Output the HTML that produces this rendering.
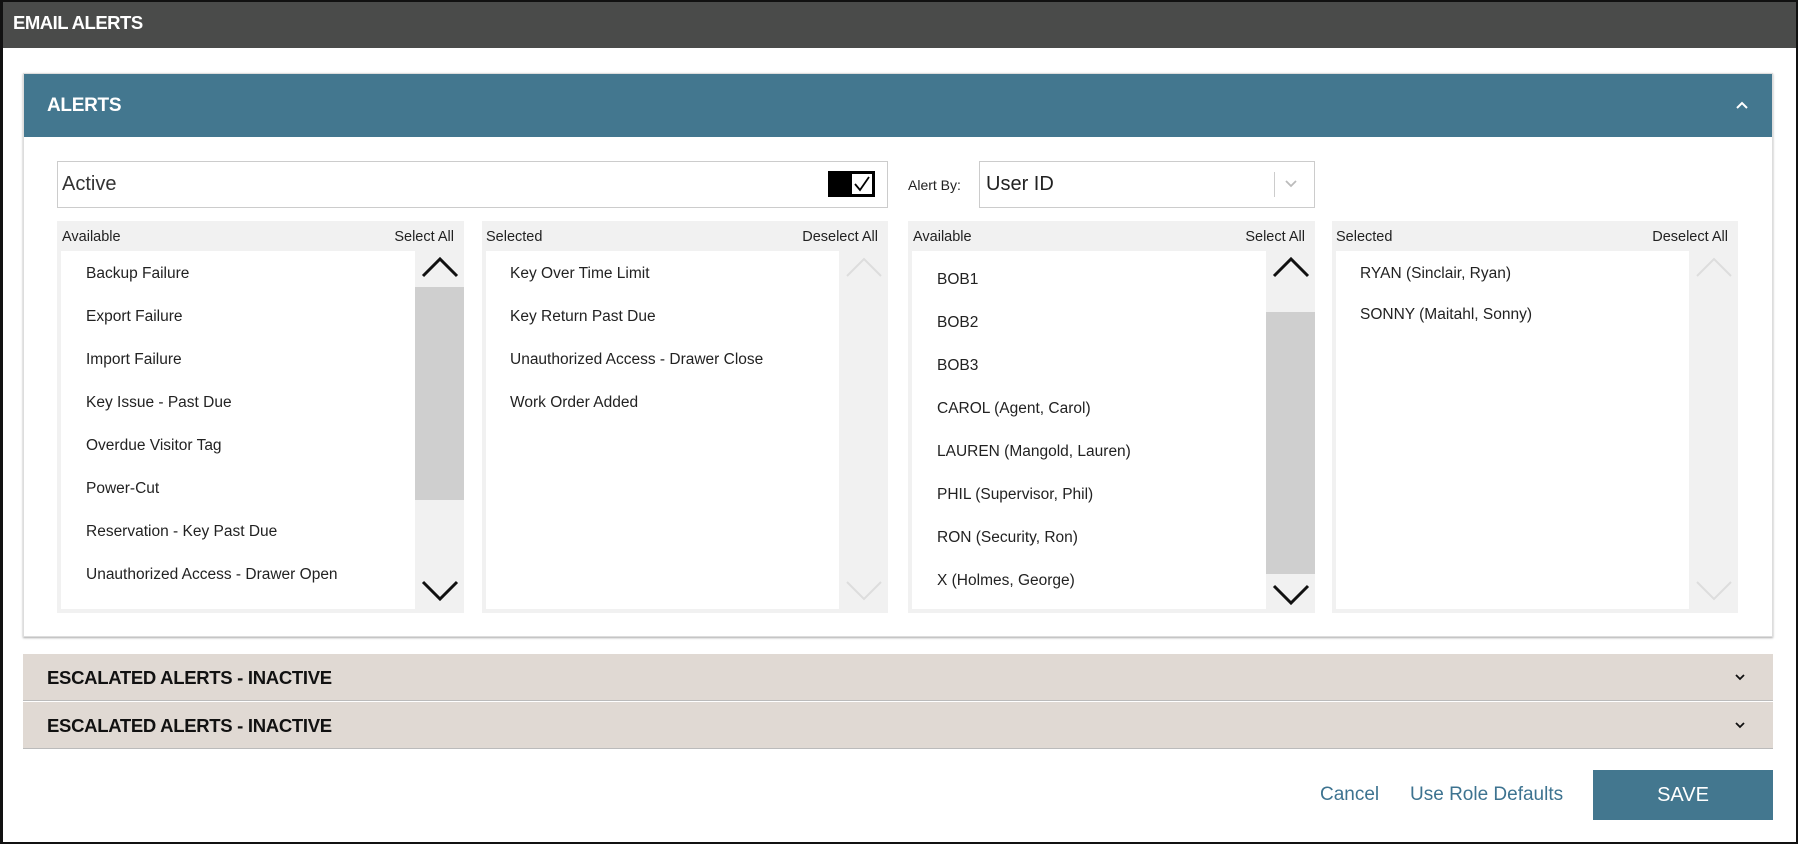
<!DOCTYPE html>
<html><head><meta charset="utf-8"><style>
*{box-sizing:border-box;margin:0;padding:0}
body{width:1798px;height:844px;overflow:hidden;background:#fff;font-family:"Liberation Sans",sans-serif;position:relative}
.frame{position:absolute;left:0;top:0;width:1798px;height:844px;border:2px solid #111;border-left-width:3px}
.top{position:absolute;left:0;top:0;width:1798px;height:48px;background:#4a4b4a;color:#fff;font-weight:bold;font-size:18.5px;line-height:46px;padding-left:13px;letter-spacing:-0.5px}
.panel{position:absolute;left:23px;top:73px;width:1750px;height:564px;background:#fff;border:1px solid #ddd;box-shadow:0 1px 2px #aaa}
.ph{position:absolute;left:0;top:0;width:100%;height:63px;background:#43778f;color:#fff;font-weight:bold;font-size:19px;line-height:63px;padding-left:23px;letter-spacing:-0.3px}
.abs{position:absolute}
.box{position:absolute;border:1px solid #ccc;background:#fff}
.list{position:absolute;top:221px;height:392px;background:#f1f1f1;font-size:15.5px;color:#222}
.lh{position:absolute;top:8px;font-size:14.5px;color:#222}
.inner{position:absolute;top:30px;bottom:4px;background:#fff}
.it{position:absolute;white-space:nowrap}
.thumb{position:absolute;background:#cfcfcf}
.esc{position:absolute;left:23px;width:1750px;height:47px;background:#e0d9d3;border-bottom:1px solid #bbb;font-weight:bold;font-size:18.5px;line-height:47px;padding-left:24px;color:#111;letter-spacing:-0.3px}
.lnk{position:absolute;top:784px;color:#3d7390;font-size:19px}
</style></head><body>
<div class="top">EMAIL ALERTS</div>
<div class="frame"></div>
<div class="panel">
<div class="ph">ALERTS</div>
<svg class="abs" style="left:1711px;top:26px" width="14" height="10"><path d="M2 8 L7 3 L12 8" stroke="#fff" stroke-width="2" fill="none"/></svg>
</div>
<div class="box" style="left:57px;top:161px;width:831px;height:47px"></div>
<div class="abs" style="left:62px;top:173px;font-size:20px;color:#333">Active</div>
<div class="abs" style="left:828px;top:171px;width:47px;height:26px;background:#000"></div>
<div class="abs" style="left:851px;top:173px;width:22px;height:22px;background:#fff;border:1px solid #000"></div>
<svg class="abs" style="left:852px;top:174px" width="20" height="20"><path d="M3 10 L8 16 L17 3" stroke="#000" stroke-width="1.8" fill="none"/></svg>
<div class="abs" style="left:908px;top:177px;font-size:14px;color:#222">Alert By:</div>
<div class="box" style="left:979px;top:161px;width:336px;height:47px"></div>
<div class="abs" style="left:986px;top:173px;font-size:20px;color:#222">User ID</div>
<div class="abs" style="left:1274px;top:172px;width:1px;height:25px;background:#ccc"></div>
<svg class="abs" style="left:1284px;top:179px" width="14" height="10"><path d="M2 2 L7 7 L12 2" stroke="#bbb" stroke-width="1.8" fill="none"/></svg>

<div class="list" style="left:57px;width:407px">
<div class="lh" style="left:5px">Available</div><div class="lh" style="right:10px">Select All</div>
<div class="inner" style="left:4px;width:354px">
<div class="it" style="left:25px;top:14px">Backup Failure</div>
<div class="it" style="left:25px;top:57px">Export Failure</div>
<div class="it" style="left:25px;top:100px">Import Failure</div>
<div class="it" style="left:25px;top:143px">Key Issue - Past Due</div>
<div class="it" style="left:25px;top:186px">Overdue Visitor Tag</div>
<div class="it" style="left:25px;top:229px">Power-Cut</div>
<div class="it" style="left:25px;top:272px">Reservation - Key Past Due</div>
<div class="it" style="left:25px;top:315px">Unauthorized Access - Drawer Open</div>
</div>
<div class="thumb" style="left:358px;top:66px;width:49px;height:213px"></div>
<svg class="abs" style="left:364px;top:34px" width="38" height="24"><path d="M2 21 L19 4 L36 21" stroke="#111" stroke-width="3" fill="none"/></svg>
<svg class="abs" style="left:364px;top:358px" width="38" height="24"><path d="M2 3 L19 20 L36 3" stroke="#111" stroke-width="3" fill="none"/></svg>
</div>
<div class="list" style="left:482px;width:406px">
<div class="lh" style="left:4px">Selected</div><div class="lh" style="right:10px">Deselect All</div>
<div class="inner" style="left:4px;width:353px">
<div class="it" style="left:24px;top:14px">Key Over Time Limit</div>
<div class="it" style="left:24px;top:57px">Key Return Past Due</div>
<div class="it" style="left:24px;top:100px">Unauthorized Access - Drawer Close</div>
<div class="it" style="left:24px;top:143px">Work Order Added</div>
</div>
<svg class="abs" style="left:363px;top:34px" width="38" height="24"><path d="M2 21 L19 4 L36 21" stroke="#ddd" stroke-width="2" fill="none"/></svg>
<svg class="abs" style="left:363px;top:358px" width="38" height="24"><path d="M2 3 L19 20 L36 3" stroke="#ddd" stroke-width="2" fill="none"/></svg>
</div>
<div class="list" style="left:908px;width:407px">
<div class="lh" style="left:5px">Available</div><div class="lh" style="right:10px">Select All</div>
<div class="inner" style="left:4px;width:354px">
<div class="it" style="left:25px;top:20px">BOB1</div>
<div class="it" style="left:25px;top:63px">BOB2</div>
<div class="it" style="left:25px;top:106px">BOB3</div>
<div class="it" style="left:25px;top:149px">CAROL (Agent, Carol)</div>
<div class="it" style="left:25px;top:192px">LAUREN (Mangold, Lauren)</div>
<div class="it" style="left:25px;top:235px">PHIL (Supervisor, Phil)</div>
<div class="it" style="left:25px;top:278px">RON (Security, Ron)</div>
<div class="it" style="left:25px;top:321px">X (Holmes, George)</div>
</div>
<div class="thumb" style="left:358px;top:91px;width:49px;height:262px"></div>
<svg class="abs" style="left:364px;top:34px" width="38" height="24"><path d="M2 21 L19 4 L36 21" stroke="#111" stroke-width="3" fill="none"/></svg>
<svg class="abs" style="left:364px;top:362px" width="38" height="24"><path d="M2 3 L19 20 L36 3" stroke="#111" stroke-width="3" fill="none"/></svg>
</div>
<div class="list" style="left:1332px;width:406px">
<div class="lh" style="left:4px">Selected</div><div class="lh" style="right:10px">Deselect All</div>
<div class="inner" style="left:4px;width:353px">
<div class="it" style="left:24px;top:14px">RYAN (Sinclair, Ryan)</div>
<div class="it" style="left:24px;top:55px">SONNY (Maitahl, Sonny)</div>
</div>
<svg class="abs" style="left:363px;top:34px" width="38" height="24"><path d="M2 21 L19 4 L36 21" stroke="#ddd" stroke-width="2" fill="none"/></svg>
<svg class="abs" style="left:363px;top:358px" width="38" height="24"><path d="M2 3 L19 20 L36 3" stroke="#ddd" stroke-width="2" fill="none"/></svg>
</div>

<div class="esc" style="top:654px">ESCALATED ALERTS - INACTIVE</div>
<svg class="abs" style="left:1734px;top:673px" width="12" height="8"><path d="M2 2 L6 6 L10 2" stroke="#111" stroke-width="1.8" fill="none"/></svg>
<div class="esc" style="top:702px">ESCALATED ALERTS - INACTIVE</div>
<svg class="abs" style="left:1734px;top:721px" width="12" height="8"><path d="M2 2 L6 6 L10 2" stroke="#111" stroke-width="1.8" fill="none"/></svg>

<div class="lnk" style="left:1320px">Cancel</div>
<div class="lnk" style="left:1410px">Use Role Defaults</div>
<div class="abs" style="left:1593px;top:770px;width:180px;height:50px;background:#43778f;color:#fff;font-size:20px;line-height:50px;text-align:center">SAVE</div>
</body></html>
